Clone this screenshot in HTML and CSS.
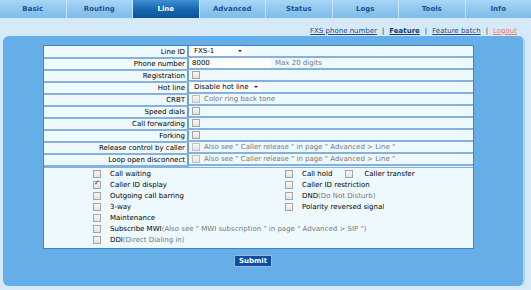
FILE: index.html
```html
<!DOCTYPE html>
<html>
<head>
  <title>Line - Feature</title>
  <link rel="stylesheet" href="styles.css">
</head>
<body>
  <div class="tabs">
    <a class="tab" href="#">Basic</a>
    <a class="tab" href="#">Routing</a>
    <a class="tab active" href="#">Line</a>
    <a class="tab" href="#">Advanced</a>
    <a class="tab" href="#">Status</a>
    <a class="tab" href="#">Logs</a>
    <a class="tab" href="#">Tools</a>
    <a class="tab" href="#">Info</a>
  </div>

  <div class="links">
    <a href="#">FXS phone number</a>
    <span class="sep">|</span>
    <a href="#" class="current">Feature</a>
    <span class="sep">|</span>
    <a href="#">Feature batch</a>
    <span class="sep">|</span>
    <a href="#" class="logout">Logout</a>
  </div>

  <div class="panel">
    <div class="box">
      <table class="form">
        <tr>
          <td class="label">Line ID</td>
          <td class="value">
            <span class="select sel-line"><select id="line-id"><option>FXS-1</option><option>FXS-2</option></select></span>
          </td>
        </tr>
        <tr>
          <td class="label">Phone number</td>
          <td class="value"><input type="text" class="text" id="phone-number" value="8000"><span class="hint">Max 20 digits</span></td>
        </tr>
        <tr>
          <td class="label">Registration</td>
          <td class="value"><input type="checkbox" class="cb"></td>
        </tr>
        <tr>
          <td class="label">Hot line</td>
          <td class="value">
            <span class="select sel-hot"><select id="hot-line"><option>Disable hot line</option><option>Enable hot line</option></select></span>
          </td>
        </tr>
        <tr>
          <td class="label">CRBT</td>
          <td class="value"><input type="checkbox" class="cb" disabled><span class="hint">Color ring back tone</span></td>
        </tr>
        <tr>
          <td class="label">Speed dials</td>
          <td class="value"><input type="checkbox" class="cb"></td>
        </tr>
        <tr>
          <td class="label">Call forwarding</td>
          <td class="value"><input type="checkbox" class="cb"></td>
        </tr>
        <tr>
          <td class="label">Forking</td>
          <td class="value"><input type="checkbox" class="cb"></td>
        </tr>
        <tr>
          <td class="label">Release control by caller</td>
          <td class="value"><input type="checkbox" class="cb" disabled><span class="hint">Also see " Caller release " in page " Advanced &gt; Line "</span></td>
        </tr>
        <tr>
          <td class="label">Loop open disconnect</td>
          <td class="value"><input type="checkbox" class="cb" disabled><span class="hint">Also see " Caller release " in page " Advanced &gt; Line "</span></td>
        </tr>
      </table>

      <div class="features">
        <div class="feat-row">
          <label class="item left"><input type="checkbox" class="cb">Call waiting</label>
          <label class="item"><input type="checkbox" class="cb">Call hold</label>
          <label class="item extra"><input type="checkbox" class="cb">Caller transfer</label>
        </div>
        <div class="feat-row">
          <label class="item left"><input type="checkbox" class="cb" checked>Caller ID display</label>
          <label class="item"><input type="checkbox" class="cb">Caller ID restriction</label>
        </div>
        <div class="feat-row">
          <label class="item left"><input type="checkbox" class="cb">Outgoing call barring</label>
          <label class="item"><input type="checkbox" class="cb">DND<span class="note">(Do Not Disturb)</span></label>
        </div>
        <div class="feat-row">
          <label class="item left"><input type="checkbox" class="cb">3-way</label>
          <label class="item"><input type="checkbox" class="cb">Polarity reversed signal</label>
        </div>
        <div class="feat-row">
          <label class="item left"><input type="checkbox" class="cb">Maintenance</label>
        </div>
        <div class="feat-row">
          <label class="item left"><input type="checkbox" class="cb">Subscribe MWI<span class="note">(Also see " MWI subscription " in page " Advanced &gt; SIP ")</span></label>
        </div>
        <div class="feat-row">
          <label class="item left"><input type="checkbox" class="cb">DDI<span class="note">(Direct Dialing in)</span></label>
        </div>
      </div>
    </div>

    <div class="actions">
      <button class="btn" type="button">Submit</button>
    </div>
  </div>
</body>
</html>
```

FILE: styles.css
```css
body {
  margin: 0;
  background-color: #D6E9F8;
  font-family: "DejaVu Sans", Verdana, sans-serif;
  font-size: 7px;
  color: #000;
}

.tabs {
  display: flex;
  height: 18px;
}

.tab {
  flex: 1;
  display: flex;
  align-items: center;
  justify-content: center;
  background: linear-gradient(#A9D6F5, #8CC6EE 60%, #7DBBEA);
  border-right: 1px solid #C9E4F8;
  color: #1D4F91;
  font-weight: bold;
  text-decoration: none;
}

.tab:last-child {
  border-right: none;
}

.tab.active {
  background: linear-gradient(#3F8FD3, #1565B0 55%, #0C5399);
  color: #FFF;
}

.links {
  display: flex;
  justify-content: flex-end;
  align-items: center;
  gap: 5px;
  height: 11px;
  margin-top: 7px;
  padding-right: 14px;
}

.links a {
  color: #1F4A86;
}

.links a.current {
  font-weight: bold;
  color: #17386A;
}

.links a.logout {
  color: #F0766A;
}

.links .sep {
  color: #333;
}

.panel {
  margin: 0 6px 0 3px;
  background-color: #66AEE7;
  border-radius: 6px;
  border-right: 2px solid #A8D2F2;
  padding: 9px 0 19px 40px;
}

.box {
  width: 429px;
  background-color: #EEF9FE;
  border: 1px solid #3B85CE;
}

.form {
  width: 100%;
  border-collapse: collapse;
}

.form td {
  height: 10px;
  padding: 0 2px;
  border-bottom: 2px solid #86B1DD;
  white-space: nowrap;
}

.form .label {
  width: 139px;
  text-align: right;
  border-right: 2px solid #6D9FD6;
}

.form .value {
  display: flex;
  align-items: center;
}

.select {
  position: relative;
  display: inline-block;
  background-color: #FFF;
  height: 10px;
}

.select select {
  appearance: none;
  border: none;
  background: transparent;
  font: inherit;
  color: #000;
  height: 10px;
  padding: 0 0 0 3px;
  width: 100%;
}

.select::after {
  content: "";
  position: absolute;
  right: 3px;
  top: 4px;
  border-left: 2px solid transparent;
  border-right: 2px solid transparent;
  border-top: 2px solid #222;
}

.sel-line {
  width: 54px;
}

.sel-hot {
  width: 70px;
}

.text {
  width: 80px;
  height: 10px;
  border: none;
  padding: 0 0 0 1px;
  font: inherit;
  color: #000;
  box-sizing: border-box;
}

.hint {
  color: #777;
  margin-left: 4px;
}

.cb {
  appearance: none;
  flex-shrink: 0;
  width: 8px;
  height: 8px;
  margin: 0 0 0 1px;
  border: 1px solid #A5A5A5;
  background: linear-gradient(#F8F8F8, #E2E2E2);
  box-sizing: border-box;
  position: relative;
}

.cb:disabled {
  border-color: #C2C2C2;
}

.cb:checked::after {
  content: "\2713";
  position: absolute;
  left: 0;
  top: -3px;
  font-size: 7px;
  color: #333;
}

.features {
  border-top: 1px solid #86B1DD;
  padding: 0 0 3px 48px;
}

.feat-row {
  display: flex;
  height: 11px;
  align-items: center;
}

.item {
  display: flex;
  align-items: center;
  white-space: nowrap;
}

.item .cb {
  margin-right: 9px;
}

.item.left {
  width: 192px;
}

.item.extra {
  margin-left: 12px;
}

.item.extra .cb {
  margin-right: 11px;
}

.note {
  color: #777;
}

.actions {
  padding-top: 6px;
  width: 420px;
  text-align: center;
}

.btn {
  background-color: #0D4FA4;
  color: #FFF;
  font-family: "DejaVu Sans", Verdana, sans-serif;
  font-size: 7px;
  font-weight: bold;
  height: 12px;
  padding: 0 4px;
  border: 1px solid #9CB5D6;
  cursor: pointer;
}
```
